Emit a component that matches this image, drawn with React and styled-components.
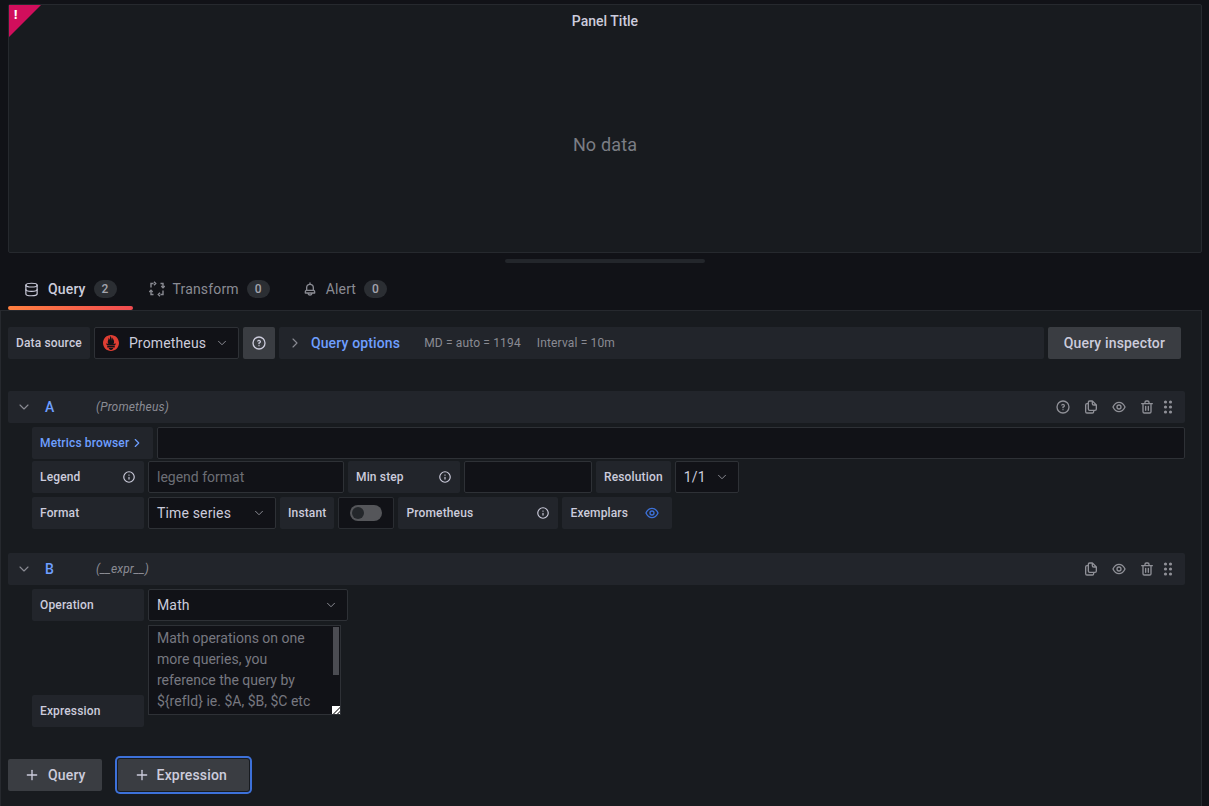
import styled, { createGlobalStyle } from "styled-components";
import { SiPrometheus } from "react-icons/si";
import { ChevronDown, ChevronRight, Database, Plus } from "lucide-react";

const GlobalStyle = createGlobalStyle`
  html, body {
    margin: 0;
    height: 100%;
    background: #111217;
    overflow: hidden;
  }
  body {
    font-family: Roboto, "Liberation Sans", sans-serif;
    font-size: 14px;
    letter-spacing: 0.01071em;
    color: #ccccdc;
  }
  * { box-sizing: border-box; }
`;

const Page = styled.div`
  height: 806px;
  width: 1202px;
  display: flex;
  flex-direction: column;
`;

const Panel = styled.section`
  position: relative;
  flex: none;
  height: 249px;
  margin: 4px 0 0 8px;
  background: #181b1f;
  border: 1px solid #26292e;
  border-radius: 2px;
  display: flex;
  flex-direction: column;
  align-items: center;
`;

const PanelTitle = styled.h2`
  margin: 0;
  height: 32px;
  line-height: 32px;
  font-size: 14px;
  font-weight: 500;
  letter-spacing: 0;
  color: #ccccdc;
`;

const NoData = styled.div`
  margin-top: 96px;
  line-height: 24px;
  font-size: 18px;
  color: #7b7d84;
`;

const ErrorCorner = styled.div`
  position: absolute;
  top: 0;
  left: 0;
  width: 0;
  height: 0;
  border-style: solid;
  border-width: 32px 32px 0 0;
  border-color: #d10e5c transparent transparent transparent;
`;

const ErrorMark = styled.span`
  position: absolute;
  top: 3px;
  left: 5px;
  font-size: 12px;
  line-height: 14px;
  font-weight: 900;
  color: #fff;
`;

const ResizeHandle = styled.div`
  flex: none;
  width: 200px;
  height: 4px;
  margin: 6px 0 0 505px;
  border-radius: 2px;
  background: #23262b;
`;

const TabBar = styled.nav`
  flex: none;
  display: flex;
  height: 40px;
  margin-top: 7px;
  padding-left: 8px;
`;

const Tab = styled.div`
  position: relative;
  display: flex;
  align-items: center;
  gap: 8px;
  padding: 0 16px 2px;
  font-weight: ${(p) => (p.$active ? 500 : 400)};
  color: ${(p) => (p.$active ? "#ccccdc" : "#8a8b93")};

  &::after {
    content: "";
    display: ${(p) => (p.$active ? "block" : "none")};
    position: absolute;
    left: 0;
    right: 0;
    bottom: 0;
    height: 4px;
    border-radius: 2px;
    background: linear-gradient(90deg, #ff8040, #f04b50);
  }
`;

const TabDatabase = styled(Database)`
  margin-right: 1px;
`;

const Counter = styled.span`
  width: 23px;
  height: 18px;
  border-radius: 9px;
  background: #2b2e33;
  color: #a3a4ad;
  font-size: 12px;
  font-weight: 500;
  line-height: 18px;
  text-align: center;
`;

const Editor = styled.main`
  flex: 1;
  background: #181b1f;
  border: 1px solid #26292e;
  border-bottom: 0;
  padding: 16px 16px 0 7px;
`;

const Toolbar = styled.div`
  display: flex;
  gap: 4px;
  padding-right: 4px;
  margin-bottom: 32px;
`;

const Label = styled.label`
  flex: none;
  display: flex;
  align-items: center;
  justify-content: space-between;
  width: ${(p) => (p.$w ? `${p.$w}px` : "auto")};
  height: 32px;
  padding: 0 ${(p) => p.$right || 8}px 0 8px;
  background: #22252b;
  border-radius: 2px;
  font-size: 12px;
  font-weight: 500;
  color: #ccccdc;
  align-self: ${(p) => (p.$bottom ? "flex-end" : "auto")};
`;

const LinkLabel = styled(Label)`
  color: #6e9fff;
  justify-content: flex-start;
  gap: 1px;
`;

const Select = styled.div`
  flex: none;
  display: flex;
  align-items: center;
  justify-content: space-between;
  width: ${(p) => p.$w}px;
  height: 32px;
  padding: 0 9px 0 8px;
  background: #111217;
  border: 1px solid #2e3136;
  border-radius: 2px;
  color: #ccccdc;

  svg:last-child { color: #8a8b93; }
`;

const SourceName = styled.span`
  display: flex;
  align-items: center;
  gap: 10px;
`;

const SquareButton = styled.button`
  flex: none;
  display: flex;
  align-items: center;
  justify-content: center;
  width: 32px;
  height: 32px;
  padding: 0;
  border: 0;
  border-radius: 2px;
  background: #3a3d42;
  color: #ccccdc;
`;

const OptionsBar = styled.div`
  flex: 1;
  display: flex;
  align-items: center;
  height: 32px;
  padding-left: 8px;
  background: #22252b;
  border-radius: 2px;
  color: #8a8b93;
`;

const OptionsTitle = styled.span`
  margin: 0 24px 0 8px;
  font-weight: 500;
  color: #6e9fff;
`;

const OptionsInfo = styled.span`
  margin-right: 16px;
  font-size: 12px;
  color: #8a8b93;
`;

const Button = styled.button`
  flex: none;
  display: flex;
  align-items: center;
  gap: ${(p) => (p.$focus ? 7 : 8)}px;
  height: 32px;
  padding: 0 16px;
  min-width: ${(p) => (p.$focus ? "131px" : "0")};
  margin-left: ${(p) => (p.$focus ? "16px" : "0")};
  border: 0;
  border-radius: 2px;
  background: #3a3d42;
  color: #ccccdc;
  font-family: inherit;
  font-size: 14px;
  font-weight: 500;
  letter-spacing: inherit;
  box-shadow: ${(p) => (p.$focus ? "0 0 0 1px #181b1f, 0 0 0 3px #3d71d9" : "none")};
`;

const QueryHeader = styled.header`
  display: flex;
  align-items: center;
  height: 32px;
  padding: 0 8px;
  background: #22252b;
  border-radius: 2px;
  color: #8a8b93;
`;

const RefId = styled.span`
  width: 51px;
  margin-left: 13px;
  font-size: 14px;
  font-weight: 500;
  color: #6e9fff;
`;

const SourceHint = styled.em`
  flex: 1;
  font-size: 12px;
  color: #8a8b93;
`;

const Actions = styled.div`
  display: flex;
  align-items: center;
  gap: 12px;
  margin-right: 1px;
  color: #8f9097;
`;

const Grip = styled.svg`
  margin-left: -7px;
`;

const QueryBody = styled.div`
  margin: 0 0 24px 24px;
  padding-top: 4px;
`;

const Row = styled.div`
  display: flex;
  align-items: ${(p) => (p.$top ? "flex-start" : "stretch")};
  gap: 4px;
  margin-bottom: ${(p) => p.$after || 0}px;
  height: ${(p) => (p.$h ? `${p.$h}px` : "auto")};
`;

const Input = styled.input`
  flex: ${(p) => (p.$w ? "none" : 1)};
  width: ${(p) => (p.$w ? `${p.$w}px` : "auto")};
  height: 32px;
  padding: 0 8px;
  background: #111217;
  border: 1px solid #2e3136;
  border-radius: 2px;
  color: #ccccdc;
  font-family: inherit;
  font-size: 14px;
  outline: none;

  &::placeholder { color: #6c6e75; opacity: 1; }
`;

const SwitchBox = styled.div`
  flex: none;
  display: flex;
  align-items: center;
  justify-content: center;
  width: 56px;
  height: 32px;
  background: #111217;
  border: 1px solid #2a2d32;
  border-radius: 2px;
`;

const SwitchTrack = styled.span`
  position: relative;
  width: 32px;
  height: 16px;
  border-radius: 8px;
  background: #55565a;

  &::before {
    content: "";
    position: absolute;
    top: 2px;
    left: 2px;
    width: 12px;
    height: 12px;
    border-radius: 50%;
    background: #24272b;
  }
`;

/* the scrollbar and resize corner lie over the textarea: headless chrome hides the real ones */
const NoteBox = styled.div`
  position: relative;
  flex: none;
  width: 193px;
  height: 90px;
`;

const Note = styled.textarea`
  display: block;
  width: 100%;
  height: 100%;
  padding: 2px 18px 0 8px;
  background: #111217;
  border: 1px solid #2e3136;
  border-radius: 0;
  color: #ccccdc;
  font-family: inherit;
  font-size: 14px;
  line-height: 21px;
  overflow: hidden;
  resize: none;
  outline: none;

  &::placeholder { color: #777880; opacity: 1; }
`;

const NoteThumb = styled.span`
  position: absolute;
  top: 1px;
  right: 1px;
  width: 8px;
  height: 50px;
  background: #4b4c52;
  border: 1px solid #111217;
`;

const NoteCorner = styled.span`
  position: absolute;
  right: 1px;
  bottom: 1px;
  width: 8px;
  height: 8px;
  background: linear-gradient(135deg, #fff 55%, #777 55%, #777 65%, #fff 65%, #fff 78%, #777 78%, #777 88%, #fff 88%);
`;

const AddRow = styled.div`
  display: flex;
  margin-top: 32px;
`;

const Icon = ({ d, size = 16, color }) => (
  <svg width={size} height={size} viewBox="0 0 24 24" fill={color || "currentColor"}>
    <path d={d} />
  </svg>
);

const icons = {
  question:
    "M11.29,15.29a1.58,1.58,0,0,0-.12.15.76.76,0,0,0-.09.18.64.64,0,0,0-.06.18,1.36,1.36,0,0,0,0,.2.84.84,0,0,0,.08.38.9.9,0,0,0,.54.54.94.94,0,0,0,.76,0,.9.9,0,0,0,.54-.54A1,1,0,0,0,13,16a1,1,0,0,0-.29-.71A1,1,0,0,0,11.29,15.29ZM12,2A10,10,0,1,0,22,12,10,10,0,0,0,12,2Zm0,18a8,8,0,1,1,8-8A8,8,0,0,1,12,20ZM12,7A3,3,0,0,0,9.4,8.5a1,1,0,1,0,1.73,1A1,1,0,0,1,12,9a1,1,0,0,1,0,2,1,1,0,0,0-1,1v1a1,1,0,0,0,2,0v-.18A3,3,0,0,0,12,7Z",
  info:
    "M12,2A10,10,0,1,0,22,12,10,10,0,0,0,12,2Zm0,18a8,8,0,1,1,8-8A8,8,0,0,1,12,20Zm0-8.5a1,1,0,0,0-1,1v3a1,1,0,0,0,2,0v-3A1,1,0,0,0,12,11.5Zm0-4a1.25,1.25,0,1,0,1.25,1.25A1.25,1.25,0,0,0,12,7.5Z",
  copy:
    "M21,8.94a1.31,1.31,0,0,0-.06-.27l0-.09a1.07,1.07,0,0,0-.19-.28h0l-6-6h0a1.07,1.07,0,0,0-.28-.19.32.32,0,0,0-.09,0A.88.88,0,0,0,14.05,2H10A3,3,0,0,0,7,5V6H6A3,3,0,0,0,3,9V19a3,3,0,0,0,3,3h8a3,3,0,0,0,3-3V18h1a3,3,0,0,0,3-3V9S21,9,21,8.94ZM15,5.41,17.59,8H16a1,1,0,0,1-1-1ZM15,19a1,1,0,0,1-1,1H6a1,1,0,0,1-1-1V9A1,1,0,0,1,6,8H7v7a3,3,0,0,0,3,3h5Zm4-4a1,1,0,0,1-1,1H10a1,1,0,0,1-1-1V5a1,1,0,0,1,1-1h3V7a3,3,0,0,0,3,3h3Z",
  eye:
    "M21.92,11.6C19.9,6.91,16.1,4,12,4S4.1,6.91,2.08,11.6a1,1,0,0,0,0,.8C4.1,17.09,7.9,20,12,20s7.9-2.91,9.92-7.6A1,1,0,0,0,21.92,11.6ZM12,18c-3.17,0-6.17-2.29-7.9-6C5.83,8.29,8.83,6,12,6s6.17,2.29,7.9,6C18.17,15.71,15.17,18,12,18ZM12,8a4,4,0,1,0,4,4A4,4,0,0,0,12,8Zm0,6a2,2,0,1,1,2-2A2,2,0,0,1,12,14Z",
  trash:
    "M10,18a1,1,0,0,0,1-1V11a1,1,0,0,0-2,0v6A1,1,0,0,0,10,18ZM20,6H16V5a3,3,0,0,0-3-3H11A3,3,0,0,0,8,5V6H4A1,1,0,0,0,4,8H5V19a3,3,0,0,0,3,3h8a3,3,0,0,0,3-3V8h1a1,1,0,0,0,0-2ZM10,5a1,1,0,0,1,1-1h2a1,1,0,0,1,1,1V6H10Zm7,14a1,1,0,0,1-1,1H8a1,1,0,0,1-1-1V8H17Zm-3-1a1,1,0,0,0,1-1V11a1,1,0,0,0-2,0v6A1,1,0,0,0,14,18Z",
  bell:
    "M18,13.18V10a6,6,0,0,0-5-5.91V3a1,1,0,0,0-2,0V4.09A6,6,0,0,0,6,10v3.18A3,3,0,0,0,4,16v2a1,1,0,0,0,1,1H8.14a4,4,0,0,0,7.72,0H19a1,1,0,0,0,1-1V16A3,3,0,0,0,18,13.18ZM8,10a4,4,0,0,1,8,0v3H8Zm4,10a2,2,0,0,1-1.72-1h3.44A2,2,0,0,1,12,20Zm6-3H6V16a1,1,0,0,1,1-1H17a1,1,0,0,1,1,1Z",
};

const TransformIcon = () => (
  <svg width="16" height="16" viewBox="0 0 16 16" fill="none" stroke="currentColor" strokeWidth="1.4">
    <path d="M2 6.5V2.5h2.5M11.5 2.5H14V6.5M14 9.5v4h-2.5M4.5 13.5H2V9.5" />
    <path d="M5 .8l1.7 1.7L5 4.2M15.7 5L14 6.7 12.3 5M11 15.2l-1.7-1.7L11 11.8M.3 11L2 9.3 3.7 11" />
  </svg>
);

const GripIcon = () => (
  <Grip width="16" height="16" viewBox="0 0 16 16" fill="currentColor">
    <circle cx="5.5" cy="3" r="1.6" />
    <circle cx="10.5" cy="3" r="1.6" />
    <circle cx="5.5" cy="8" r="1.6" />
    <circle cx="10.5" cy="8" r="1.6" />
    <circle cx="5.5" cy="13" r="1.6" />
    <circle cx="10.5" cy="13" r="1.6" />
  </Grip>
);

const Info = () => <Icon d={icons.info} size={14} />;

const QueryRowHeader = ({ refId, source, help }) => (
  <QueryHeader>
    <ChevronDown size={16} strokeWidth={1.7} />
    <RefId>{refId}</RefId>
    <SourceHint>{source}</SourceHint>
    <Actions>
      {help && <Icon d={icons.question} />}
      <Icon d={icons.copy} />
      <Icon d={icons.eye} />
      <Icon d={icons.trash} />
      <GripIcon />
    </Actions>
  </QueryHeader>
);

export default function App() {
  return (
    <Page>
      <GlobalStyle />
      <Panel>
        <ErrorCorner />
        <ErrorMark>!</ErrorMark>
        <PanelTitle>Panel Title</PanelTitle>
        <NoData>No data</NoData>
      </Panel>
      <ResizeHandle />
      <TabBar>
        <Tab $active>
          <TabDatabase size={15} strokeWidth={1.9} />
          Query
          <Counter>2</Counter>
        </Tab>
        <Tab>
          <TransformIcon />
          Transform
          <Counter>0</Counter>
        </Tab>
        <Tab>
          <Icon d={icons.bell} />
          Alert
          <Counter>0</Counter>
        </Tab>
      </TabBar>
      <Editor>
        <Toolbar>
          <Label>Data source</Label>
          <Select $w={145}>
            <SourceName>
              <SiPrometheus size={16} color="#df3e33" />
              Prometheus
            </SourceName>
            <ChevronDown size={14} strokeWidth={1.7} />
          </Select>
          <SquareButton>
            <Icon d={icons.question} />
          </SquareButton>
          <OptionsBar>
            <ChevronRight size={16} strokeWidth={1.7} />
            <OptionsTitle>Query options</OptionsTitle>
            <OptionsInfo>MD = auto = 1194</OptionsInfo>
            <OptionsInfo>Interval = 10m</OptionsInfo>
          </OptionsBar>
          <Button>Query inspector</Button>
        </Toolbar>

        <QueryRowHeader refId="A" source="(Prometheus)" help />
        <QueryBody>
          <Row $after={2}>
            <LinkLabel $w={121}>
              Metrics browser
              <ChevronRight size={14} />
            </LinkLabel>
            <Input />
          </Row>
          <Row $after={4}>
            <Label $w={112}>
              Legend
              <Info />
            </Label>
            <Input $w={196} placeholder="legend format" />
            <Label $w={112}>
              Min step
              <Info />
            </Label>
            <Input $w={128} />
            <Label>Resolution</Label>
            <Select $w={64}>
              1/1
              <ChevronDown size={14} strokeWidth={1.7} />
            </Select>
          </Row>
          <Row>
            <Label $w={112}>Format</Label>
            <Select $w={128}>
              Time series
              <ChevronDown size={14} strokeWidth={1.7} />
            </Select>
            <Label>Instant</Label>
            <SwitchBox>
              <SwitchTrack />
            </SwitchBox>
            <Label $w={160}>
              Prometheus
              <Info />
            </Label>
            <Label $w={110} $right={12}>
              Exemplars
              <Icon d={icons.eye} color="#3d71d9" />
            </Label>
          </Row>
        </QueryBody>

        <QueryRowHeader refId="B" source="(__expr__)" />
        <QueryBody>
          <Row $after={4}>
            <Label $w={112}>Operation</Label>
            <Select $w={200}>
              Math
              <ChevronDown size={14} strokeWidth={1.7} />
            </Select>
          </Row>
          <Row $top $h={102}>
            <Label $w={112} $bottom>
              Expression
            </Label>
            <NoteBox>
              <Note placeholder="Math operations on one more queries, you reference the query by ${refId} ie. $A, $B, $C etc" />
              <NoteThumb />
              <NoteCorner />
            </NoteBox>
          </Row>
        </QueryBody>

        <AddRow>
          <Button>
            <Plus size={16} />
            Query
          </Button>
          <Button $focus>
            <Plus size={16} />
            Expression
          </Button>
        </AddRow>
      </Editor>
    </Page>
  );
}
